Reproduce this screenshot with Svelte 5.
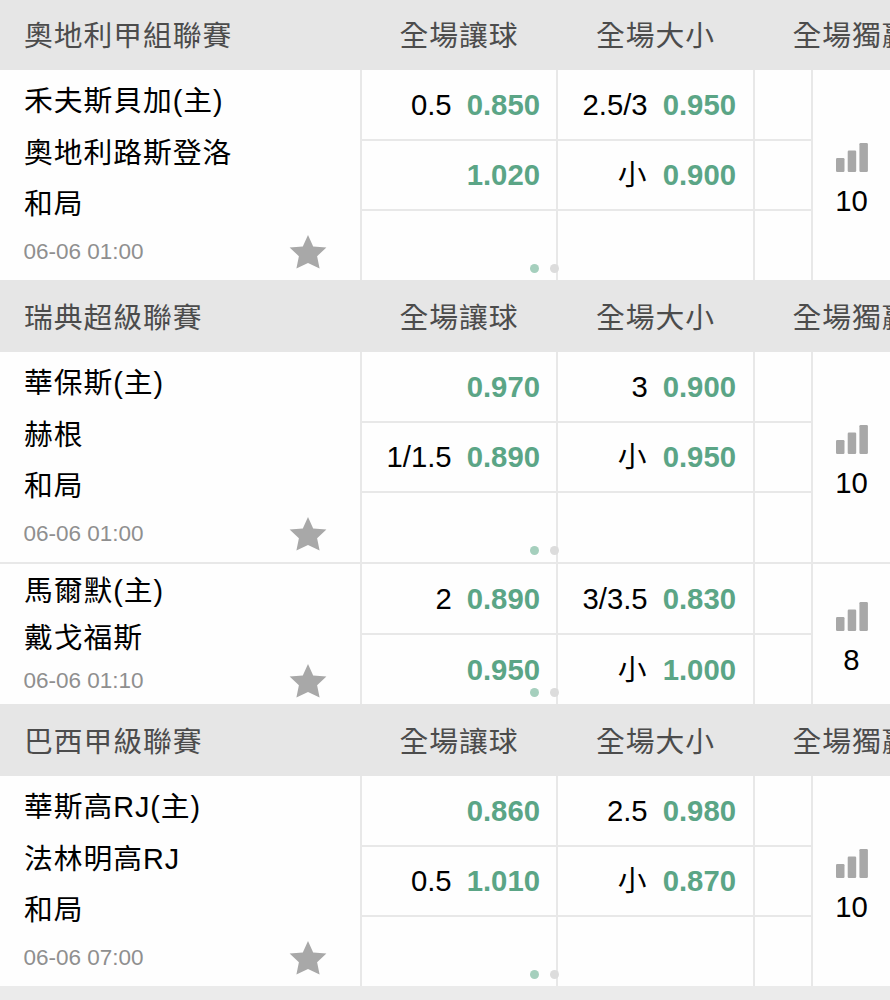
<script>
    const markets = ["全場讓球", "全場大小", "全場獨贏"]

    // rows: [handicap, odds, over/under, odds]
    const leagues = [
        {
            name: "奧地利甲組聯賽",
            matches: [
                {
                    teams: ["禾夫斯貝加(主)", "奧地利路斯登洛", "和局"],
                    time: "06-06 01:00",
                    count: 10,
                    rows: [
                        ["0.5", "0.850", "2.5/3", "0.950"],
                        ["", "1.020", "小", "0.900"],
                        ["", "", "", ""]
                    ]
                }
            ]
        },
        {
            name: "瑞典超級聯賽",
            matches: [
                {
                    teams: ["華保斯(主)", "赫根", "和局"],
                    time: "06-06 01:00",
                    count: 10,
                    rows: [
                        ["", "0.970", "3", "0.900"],
                        ["1/1.5", "0.890", "小", "0.950"],
                        ["", "", "", ""]
                    ]
                },
                {
                    teams: ["馬爾默(主)", "戴戈福斯"],
                    time: "06-06 01:10",
                    count: 8,
                    rows: [
                        ["2", "0.890", "3/3.5", "0.830"],
                        ["", "0.950", "小", "1.000"]
                    ]
                }
            ]
        },
        {
            name: "巴西甲級聯賽",
            matches: [
                {
                    teams: ["華斯高RJ(主)", "法林明高RJ", "和局"],
                    time: "06-06 07:00",
                    count: 10,
                    rows: [
                        ["", "0.860", "2.5", "0.980"],
                        ["0.5", "1.010", "小", "0.870"],
                        ["", "", "", ""]
                    ]
                }
            ]
        }
    ]
</script>

<main>
    {#each leagues as league}
        <section>
            <header>
                <h2>{league.name}</h2>
                {#each markets as market}
                    <span>{market}</span>
                {/each}
            </header>

            {#each league.matches as match}
                <article class:compact={match.teams.length == 2}>
                    <div class="info">
                        {#each match.teams as team}
                            <div class="team">{team}</div>
                        {/each}
                        <div class="meta">
                            <time>{match.time}</time>
                            <svg class="star" width="38" height="34" viewBox="0 0 38 34">
                                <path d="M19 0L24.2 11.4L37.4 12.6L28.1 21.2L30.6 33.4L19 28L7.4 33.4L9.9 21.2L.6 12.6L13.8 11.4Z" />
                            </svg>
                        </div>
                    </div>

                    <div class="odds">
                        {#each match.rows as row}
                            <div class="row">
                                <div class="cell">{row[0]}<b>{row[1]}</b></div>
                                <div class="cell total"><span class:small={row[2] == "小"}>{row[2]}</span><b>{row[3]}</b></div>
                                <div class="cell"></div>
                            </div>
                        {/each}
                    </div>

                    <div class="more">
                        <svg width="32" height="29" viewBox="0 0 32 29">
                            <rect x="0" y="15" width="8.5" height="14" rx="1.2" />
                            <rect x="11.7" y="7.5" width="8.5" height="21.5" rx="1.2" />
                            <rect x="23.4" y="0" width="8.5" height="29" rx="1.2" />
                        </svg>
                        <span>{match.count}</span>
                    </div>

                    <div class="dots"><i class="on"></i><i></i></div>
                </article>
            {/each}
        </section>
    {/each}
</main>

<style>
    :global(body) {
        background: #ebebeb;
    }

    main {
        height: 1000px;
        overflow: hidden;
        font-family: "Liberation Sans", "Noto Sans CJK TC", sans-serif;
        font-size: 29.3px;
        color: #000;
    }

    header {
        display: grid;
        grid-template-columns: 361px 196px 197px 196px;
        align-items: center;
        height: 72px;
        padding-bottom: 2px;
        box-sizing: border-box;
        background: #e6e6e6;
        color: #4c4c4c;
        text-align: center;
        white-space: nowrap;
    }

    section:first-child header {
        height: 70px;
        padding-bottom: 4px;
    }

    h2 {
        margin: 0;
        padding-left: 24px;
        font: inherit;
        text-align: left;
    }

    h2, header span, .team {
        font-size: 28.8px;
        letter-spacing: 0.95px;
    }

    article {
        position: relative;
        display: grid;
        grid-template-columns: 360px 451px 79px;
        height: 210px;
        background: #fefefe;
    }

    article + article {
        border-top: 2px solid #e8e8e8;
    }

    .compact {
        height: 140px;
    }

    .info {
        padding: 6px 33px 0 24px;
    }

    .team {
        height: 51.5px;
        line-height: 51px;
        white-space: nowrap;
    }

    .meta {
        display: flex;
        justify-content: space-between;
        align-items: center;
        height: 43px;
        color: #8f8f8f;
    }

    time {
        margin-left: -0.5px;
        font-size: 22.5px;
    }

    .star {
        fill: #a8a8a8;
    }

    .compact .info {
        padding-top: 4px;
    }

    .compact .team {
        height: 47px;
        line-height: 47px;
    }

    .compact .meta {
        height: 38px;
    }

    .odds {
        display: grid;
        grid-template-rows: 71px 70px 69px;
    }

    .compact .odds {
        grid-template-rows: 71px 69px;
    }

    .row {
        display: grid;
        grid-template-columns: 196px 197px 58px;
        border-bottom: 2px solid #e8e8e8;
    }

    .row:last-child {
        border-bottom: 0;
    }

    .cell {
        display: flex;
        justify-content: flex-end;
        align-items: center;
        padding-right: 16px;
        border-left: 2px solid #e8e8e8;
        line-height: 40px;
    }

    .total {
        padding-right: 17px;
    }

    .small {
        margin-right: 1px;
        font-size: 28.8px;
    }

    b {
        margin-left: 15px;
        color: #5ba586;
    }

    .more {
        display: flex;
        flex-direction: column;
        align-items: center;
        justify-content: center;
        border-left: 2px solid #e8e8e8;
    }

    .more svg {
        margin-top: 14px;
        fill: #a8a8a8;
    }

    .more span {
        margin-top: 9px;
        line-height: 40px;
    }

    .dots {
        position: absolute;
        left: 530px;
        bottom: 7px;
        display: flex;
        gap: 11px;
    }

    .dots i {
        width: 9px;
        height: 9px;
        border-radius: 50%;
        background: #dcdcdc;
    }

    .dots .on {
        background: #a5cfbd;
    }
</style>
